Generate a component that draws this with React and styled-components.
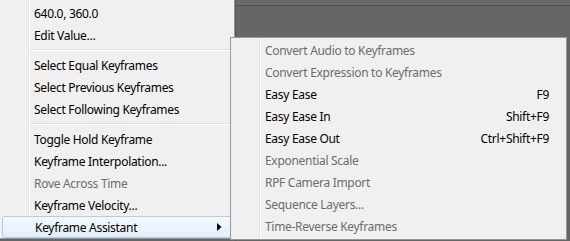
import React from "react";
import styled, { createGlobalStyle } from "styled-components";

const GlobalStyle = createGlobalStyle`
  html, body {
    margin: 0;
    padding: 0;
    background: #666666;
  }
  body {
    font-family: "Noto Sans", "Segoe UI", sans-serif;
    font-size: 12px;
    letter-spacing: -0.3px;
  }
`;

const mainItems = [
  { label: "640.0, 360.0" },
  { label: "Edit Value..." },
  { sep: true },
  { label: "Select Equal Keyframes" },
  { label: "Select Previous Keyframes" },
  { label: "Select Following Keyframes" },
  { sep: true },
  { label: "Toggle Hold Keyframe" },
  { label: "Keyframe Interpolation..." },
  { label: "Rove Across Time", disabled: true },
  { label: "Keyframe Velocity..." },
  { label: "Keyframe Assistant", active: true, sub: true },
];

const subItems = [
  { label: "Convert Audio to Keyframes", disabled: true },
  { label: "Convert Expression to Keyframes", disabled: true },
  { label: "Easy Ease", shortcut: "F9" },
  { label: "Easy Ease In", shortcut: "Shift+F9" },
  { label: "Easy Ease Out", shortcut: "Ctrl+Shift+F9" },
  { label: "Exponential Scale", disabled: true },
  { label: "RPF Camera Import", disabled: true },
  { label: "Sequence Layers...", disabled: true },
  { label: "Time-Reverse Keyframes", disabled: true },
];

export default function App() {
  return (
    <>
      <GlobalStyle />
      <Screen>
        <Menu>
          {mainItems.map((item, i) =>
            item.sep ? (
              <Separator key={i} />
            ) : (
              <Item key={i} $disabled={item.disabled} $active={item.active}>
                <span>{item.label}</span>
                {item.sub && (
                  <svg width="5" height="8" viewBox="0 0 5 8">
                    <path d="M0 0 L4.5 4 L0 8 Z" fill="#000" />
                  </svg>
                )}
              </Item>
            )
          )}
        </Menu>
        <Backdrop>
          <TopStrip />
        </Backdrop>
        <SubMenu>
          {subItems.map((item, i) => (
            <SubItem key={i} $disabled={item.disabled}>
              <span>{item.label}</span>
              {item.shortcut && <span>{item.shortcut}</span>}
            </SubItem>
          ))}
        </SubMenu>
      </Screen>
    </>
  );
}

const Screen = styled.div`
  position: relative;
  display: flex;
  width: 570px;
  height: 241px;
  overflow: hidden;
`;

const Menu = styled.div`
  width: 235px;
  height: 239px;
  padding-top: 2px;
  box-sizing: border-box;
  background: #f0f0f0;
  border-right: 1px solid #979797;
  border-bottom: 1px solid #979797;
  display: flex;
  flex-direction: column;
  background-image: linear-gradient(
    to right,
    transparent 28px,
    #e2e3e3 28px,
    #e2e3e3 29px,
    #ffffff 29px,
    #ffffff 30px,
    transparent 30px
  );
`;

const Separator = styled.div`
  height: 8px;
  margin-left: 30px;
  background: linear-gradient(
    to bottom,
    transparent 3px,
    #e0e0e0 3px,
    #e0e0e0 4px,
    #ffffff 4px,
    #ffffff 5px,
    transparent 5px
  );
`;

const Item = styled.div`
  height: 22px;
  display: flex;
  align-items: center;
  justify-content: space-between;
  padding: 0 11px 0 34px;
  box-sizing: border-box;
  color: ${(p) => (p.$disabled ? "#6d6d6d" : "#000")};
  white-space: nowrap;
  ${(p) =>
    p.$active &&
    `
    margin-left: 2px;
    padding-left: 32px;
    border: 1px solid #aeccf1;
    border-radius: 3px;
    background: linear-gradient(to bottom, #f5f9fe, #e3eefb);
  `}
`;

const Backdrop = styled.div`
  flex: 1;
  background: #666666;
  border-left: 1px solid #565656;
`;

const TopStrip = styled.div`
  height: 5px;
  background: #6a6a6a;
  border-bottom: 1px solid #505050;
`;

const SubMenu = styled.div`
  position: absolute;
  left: 230px;
  top: 37px;
  width: 337px;
  height: 203px;
  padding-top: 1px;
  box-sizing: border-box;
  background: #f0f0f0;
  border: 1px solid #979797;
  display: flex;
  flex-direction: column;
  background-image: linear-gradient(
    to right,
    transparent 28px,
    #e2e3e3 28px,
    #e2e3e3 29px,
    #ffffff 29px,
    #ffffff 30px,
    transparent 30px
  );
`;

const SubItem = styled.div`
  height: 22px;
  display: flex;
  align-items: center;
  justify-content: space-between;
  padding: 0 17px 0 34px;
  color: ${(p) => (p.$disabled ? "#6d6d6d" : "#000")};
  white-space: nowrap;
`;
